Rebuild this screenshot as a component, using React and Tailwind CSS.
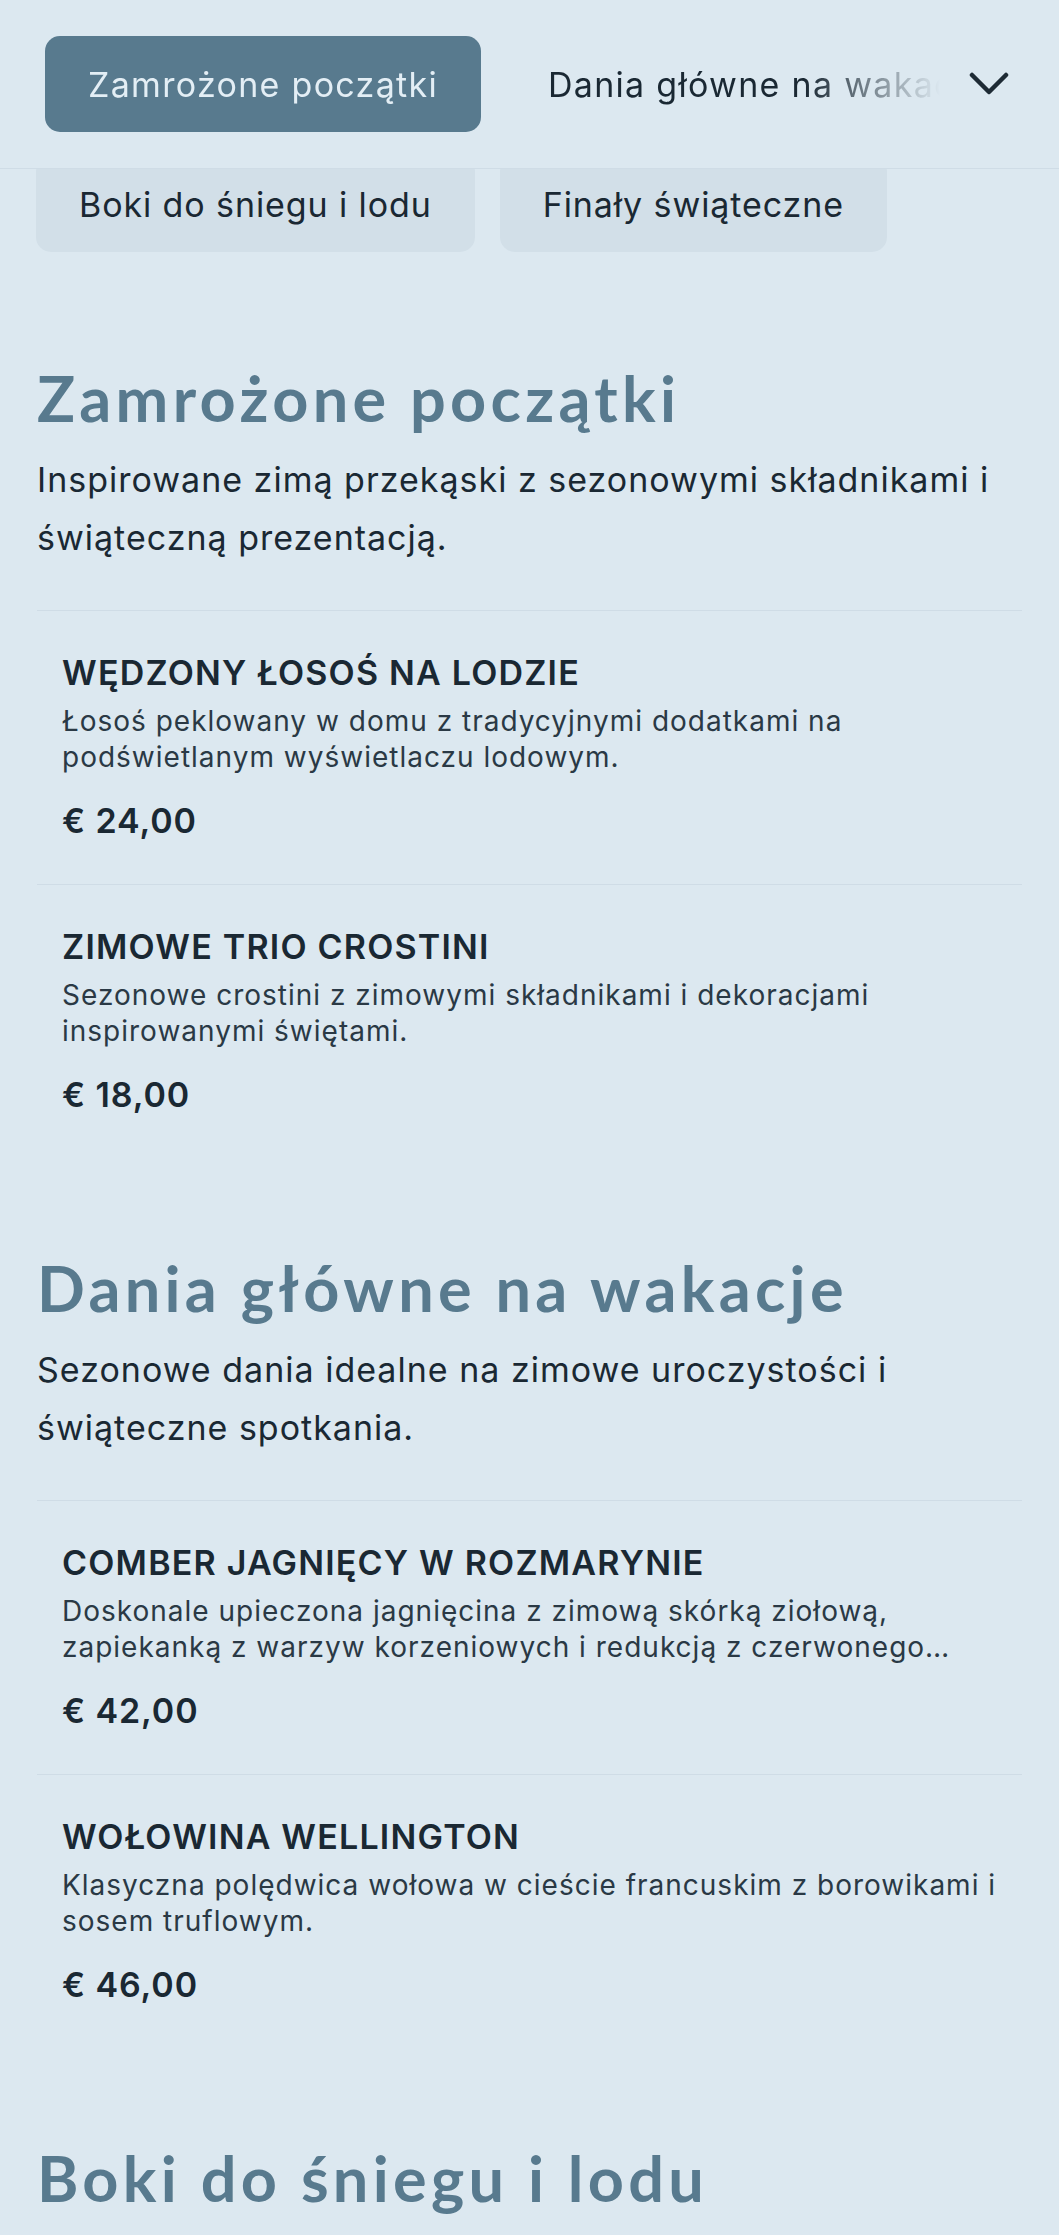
import React from "react";

const sections = [
  {
    title: "Zamrożone początki",
    desc: "Inspirowane zimą przekąski z sezonowymi składnikami i świąteczną prezentacją.",
    items: [
      {
        name: "WĘDZONY ŁOSOŚ NA LODZIE",
        desc: "Łosoś peklowany w domu z tradycyjnymi dodatkami na podświetlanym wyświetlaczu lodowym.",
        price: "€ 24,00",
      },
      {
        name: "ZIMOWE TRIO CROSTINI",
        desc: "Sezonowe crostini z zimowymi składnikami i dekoracjami inspirowanymi świętami.",
        price: "€ 18,00",
      },
    ],
  },
  {
    title: "Dania główne na wakacje",
    desc: "Sezonowe dania idealne na zimowe uroczystości i świąteczne spotkania.",
    items: [
      {
        name: "COMBER JAGNIĘCY W ROZMARYNIE",
        desc: "Doskonale upieczona jagnięcina z zimową skórką ziołową, zapiekanką z warzyw korzeniowych i redukcją z czerwonego wina.",
        price: "€ 42,00",
      },
      {
        name: "WOŁOWINA WELLINGTON",
        desc: "Klasyczna polędwica wołowa w cieście francuskim z borowikami i sosem truflowym.",
        price: "€ 46,00",
      },
    ],
  },
  {
    title: "Boki do śniegu i lodu",
    desc: "",
    items: [],
  },
];

function Item({ item, last }) {
  return (
    <div className={"px-[25px] pt-[42px] pb-[43px] " + (last ? "" : "border-b border-[#cfdce6]")}>
      <h3 className="text-[34px] leading-[40px] font-semibold text-[#1a2833] tracking-[1.2px]">
        {item.name}
      </h3>
      <p className="mt-[10px] text-[28px] leading-[36px] text-[#2a3945] tracking-[1px] line-clamp-2">
        {item.desc}
      </p>
      <div className="mt-[26px] text-[34px] leading-[40px] font-semibold text-[#1a2833] tracking-[0.9px]">
        {item.price}
      </div>
    </div>
  );
}

function Section({ s }) {
  return (
    <section className="px-[37px] pt-[92px]">
      <h2 className="font-['Lato',sans-serif] font-bold text-[63px] leading-[76px] text-[#587a8e] tracking-[4.3px]">
        {s.title}
      </h2>
      {s.desc && (
        <p className="mt-[15px] text-[34px] leading-[58px] text-[#1a2833] tracking-[1px] pr-[20px]">
          {s.desc}
        </p>
      )}
      {s.items.length > 0 && (
        <div className="mt-[43px] border-t border-[#cfdce6]">
          {s.items.map((it, i) => (
            <Item key={i} item={it} last={i === s.items.length - 1} />
          ))}
        </div>
      )}
    </section>
  );
}

export default function App() {
  return (
    <div className="min-h-[2235px] bg-[#dce8f0] font-['Inter','Noto_Sans',sans-serif] overflow-hidden">
      <header className="relative z-10 h-[169px] bg-[#dce8f0] border-b border-[#cfdce6] flex items-center pl-[45px] pr-[50px]">
        <div className="flex-1 min-w-0 overflow-hidden [mask-image:linear-gradient(to_right,black_84%,transparent_99%)]">
          <div className="flex items-center gap-[24px] whitespace-nowrap">
            <button className="h-[96px] px-[43px] rounded-[15px] bg-[#587a8e] text-[#e3eef5] text-[34px] tracking-[1.3px] shrink-0">
              Zamrożone początki
            </button>
            <button className="h-[96px] px-[43px] rounded-[15px] text-[#1a2833] text-[34px] tracking-[1.3px] shrink-0">
              Dania główne na wakacje
            </button>
          </div>
        </div>
        <button className="w-[60px] h-[60px] flex items-center justify-end shrink-0">
          <svg width="40" height="24" viewBox="0 0 40 24" fill="none">
            <polyline points="3,3 20,20 37,3" stroke="#1e2b35" strokeWidth="4.5" strokeLinecap="round" strokeLinejoin="round" />
          </svg>
        </button>
      </header>
      <div className="flex gap-[25px] px-[36px] -mt-[13px]">
        <button className="h-[96px] px-[43px] rounded-[15px] bg-[#d2dfe8] text-[#1a2833] text-[34px] tracking-[0.9px] whitespace-nowrap">
          Boki do śniegu i lodu
        </button>
        <button className="h-[96px] px-[43px] rounded-[15px] bg-[#d2dfe8] text-[#1a2833] text-[34px] tracking-[0.9px] whitespace-nowrap">
          Finały świąteczne
        </button>
      </div>
      <main className="pt-[16px]">
        {sections.map((s, i) => (
          <Section key={i} s={s} />
        ))}
      </main>
    </div>
  );
}
